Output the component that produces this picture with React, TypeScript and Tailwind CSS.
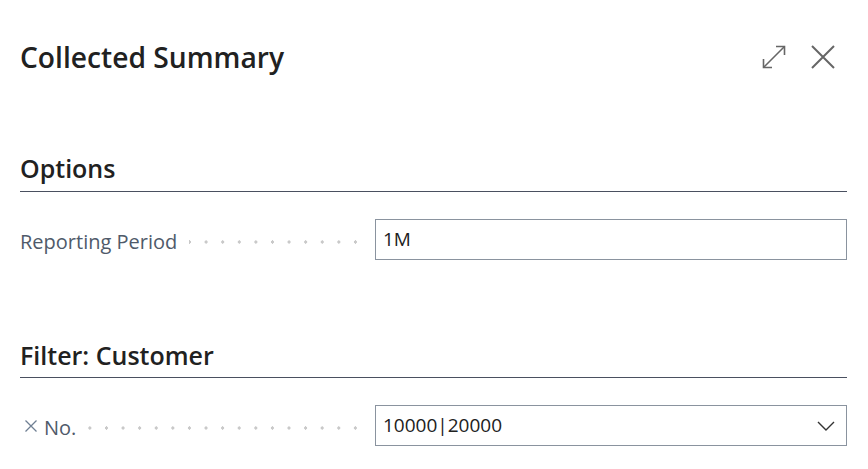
import React from "react";

function Dots() {
  return (
    <div className="flex-1 h-[6px] ml-[12px] bg-[radial-gradient(circle,#c9c9c9_1.6px,transparent_1.8px)] bg-[length:16.6px_6px] bg-[position:right_-7px_center] bg-repeat-x" />
  );
}

export default function App() {
  return (
    <div
      className="w-[868px] h-[469px] bg-white overflow-hidden pl-[20px] pr-[21px] text-[#212121]"
      style={{ fontFamily: '"Segoe UI", "Open Sans", sans-serif' }}
    >
      {/* Header */}
      <div className="flex items-center justify-between h-[58px] mt-[28px]">
        <h1 className="text-[28.2px] font-semibold leading-none">Collected Summary</h1>
        <div className="flex items-center gap-[25px] mr-[12px] text-[#666666]">
          <svg width="24" height="24" viewBox="0 0 24 24" fill="none" stroke="currentColor" strokeWidth="1.6">
            <path d="M1.5 22.5 L22.5 1.5" />
            <path d="M14 1.5 H22.5 V10" />
            <path d="M1.5 14 V22.5 H10" />
          </svg>
          <svg width="24" height="24" viewBox="0 0 24 24" fill="none" stroke="currentColor" strokeWidth="2">
            <path d="M1 1 L23 23 M23 1 L1 23" />
          </svg>
        </div>
      </div>

      {/* Options */}
      <div className="mt-[67px] border-b border-[#4a5060] pb-[8px]">
        <h2 className="text-[25px] font-semibold leading-[30px]">Options</h2>
      </div>
      <div className="flex items-center mt-[27px] h-[41px]">
        <div className="w-[337px] flex items-center pt-[4px]">
          <span className="text-[20px] text-[#4f5a6a] leading-none">Reporting Period</span>
          <Dots />
        </div>
        <div className="ml-[18px] flex-1 h-[41px] border border-[#8a939f] flex items-center px-[7px]">
          <span className="text-[19px] text-[#212121]">1M</span>
        </div>
      </div>

      {/* Filter */}
      <div className="mt-[80px] border-b border-[#4a5060] pb-[7px]">
        <h2 className="text-[25px] font-semibold leading-[30px]">Filter: Customer</h2>
      </div>
      <div className="flex items-center mt-[27px] h-[41px]">
        <div className="w-[337px] flex items-center pt-[4px]">
          <svg width="12" height="12" viewBox="0 0 12 12" className="ml-[5px] mr-[7px] -mt-[4px]" fill="none" stroke="#6f7f93" strokeWidth="1.3">
            <path d="M0.5 0.5 L11.5 11.5 M11.5 0.5 L0.5 11.5" />
          </svg>
          <span className="text-[20px] text-[#4f5a6a] leading-none">No.</span>
          <Dots />
        </div>
        <div className="ml-[18px] flex-1 h-[41px] border border-[#8a939f] flex items-center justify-between pl-[7px] pr-[11px]">
          <span className="text-[19px] text-[#212121]">10000|20000</span>
          <svg width="18" height="10" viewBox="0 0 18 10" fill="none" stroke="#333" strokeWidth="1.4">
            <path d="M1 1 L9 9 L17 1" />
          </svg>
        </div>
      </div>
    </div>
  );
}
